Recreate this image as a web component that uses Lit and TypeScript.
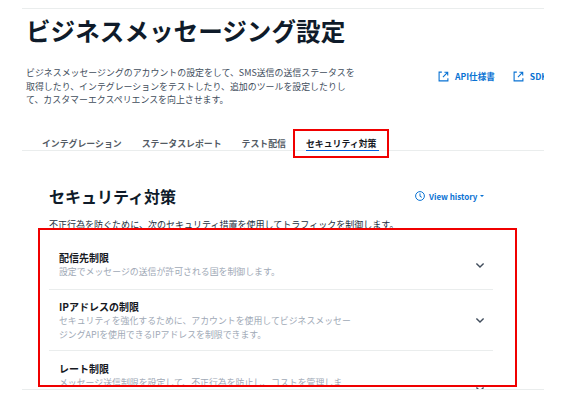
import { LitElement, html, css, svg } from "lit";
import { customElement } from "lit/decorators.js";

const extIcon = svg`<svg class="ext" viewBox="0 0 12 12" fill="none" stroke="#0972d3" stroke-width="1.2"><path d="M4.2 1.2H1.2v9.6h9.6V8"/><path d="M5.4 6.6l5-5M7 1.4h3.6V5"/></svg>`;
const chevron = svg`<svg class="chev" viewBox="0 0 10 7" fill="none" stroke="#414d5c" stroke-width="1.4"><path d="M1.4 1.4 5 5l3.6-3.6"/></svg>`;

@customElement("app-root")
export class AppRoot extends LitElement {
  static styles = css`
    :host { display: block; width: 570px; height: 402px; overflow: hidden; position: relative; background: #fff; font-family: "Noto Sans CJK JP", "Noto Sans", sans-serif; color: #16191f; }
    .page { margin-left: 22px; width: 522px; height: 380px; border-top: 1px solid #eaeded; border-bottom: 1px solid #eaeded; margin-top: 8px; overflow: hidden; position: relative; }
    h1 { margin: 0; padding: 0 0 0 4px; font-size: 24.6px; line-height: 36px; font-weight: 700; color: #0f1b2a; margin-top: 3px; white-space: nowrap; }
    .head { display: flex; margin-top: 18px; padding-left: 4px; }
    .desc { width: 332px; font-size: 8.92px; line-height: 13.7px; color: #414d5c; flex: none; }
    .links { display: flex; gap: 18px; margin-left: 80px; margin-top: 0; white-space: nowrap; height: 20px; align-items: center; }
    .link { display: flex; align-items: center; gap: 6px; color: #0972d3; font-size: 8.6px; font-weight: 700; }
    .ext { width: 11px; height: 11px; flex: none; }
    .tabs { display: flex; margin-top: 30px; border-bottom: 1px solid #eaeded; padding-left: 20px; height: 13px; gap: 20px; font-size: 8.9px; font-weight: 700; color: #545b64; line-height: 13px; }
    .tab.active { color: #16191f; border-bottom: 1px solid #0060df; height: 13px; width: 73px; }
    .section { padding-left: 27px; margin-top: 30px; }
    .sechead { display: flex; align-items: center; height: 30px; }
    h2 { margin: 0; font-size: 16px; font-weight: 700; line-height: 30px; color: #0f1b2a; width: 366px; }
    .hist { display: flex; align-items: center; gap: 4px; color: #0972d3; font-size: 8px; font-weight: 700; }
    .clock { width: 10px; height: 10px; }
    .caret { width: 0; height: 0; border-left: 2px solid transparent; border-right: 2px solid transparent; border-top: 2px solid #0972d3; margin-left: -1px; }
    .intro { font-size: 9.03px; line-height: 13px; color: #232f3e; margin-top: 7px; white-space: nowrap; }
    .list { width: 444px; margin-top: 11px; }
    .row { display: flex; position: relative; border-bottom: 1px solid #eaeded; padding: 0 0 0 10px; }
    .row:last-child { border-bottom: 0; }
    .txt { width: 295px; }
    .t { font-size: 10px; font-weight: 700; line-height: 14px; color: #16191f; }
    .d { font-size: 8.9px; line-height: 13.7px; color: #a0a9b6; }
    .pin { position: absolute; left: 0; width: 100%; height: 6px; }
    .pin1 { top: 20px; }
    .pin2 { top: 27px; }
    .pin3 { top: 35px; }
    .chev { position: absolute; width: 10px; height: 7px; left: 426px; }
    .r1 { height: 47px; }
    .r1 .txt { padding-top: 9px; }
    .r1 .d { white-space: nowrap; }
    .r2 { height: 60px; }
    .r2 .txt { padding-top: 10px; }
    .r3 { height: 60px; }
    .r3 .txt { padding-top: 11px; }
    .mark { position: absolute; border: 2px solid #f00000; box-sizing: border-box; pointer-events: none; }
    .m1 { left: 293px; top: 129px; width: 96px; height: 29px; }
    .m2 { left: 38px; top: 228px; width: 479px; height: 159px; }
  `;

  render() {
    return html`
      <div class="page">
        <h1>ビジネスメッセージング設定</h1>
        <div class="head">
          <div class="desc">ビジネスメッセージングのアカウントの設定をして、SMS送信の送信ステータスを取得したり、インテグレーションをテストしたり、追加のツールを設定したりして、カスタマーエクスペリエンスを向上させます。</div>
          <div class="links">
            <span class="link">${extIcon}API仕様書</span>
            <span class="link">${extIcon}SDK</span>
          </div>
        </div>
        <div class="tabs">
          <span class="tab">インテグレーション</span>
          <span class="tab">ステータスレポート</span>
          <span class="tab">テスト配信</span>
          <span class="tab active">セキュリティ対策</span>
        </div>
        <div class="section">
          <div class="sechead">
            <h2>セキュリティ対策</h2>
            <span class="hist">
              <svg class="clock" viewBox="0 0 10 10" fill="none" stroke="#0972d3" stroke-width="1"><circle cx="5" cy="5" r="4.4"/><path d="M5 2.4V5.3l1.8 1"/></svg>
              View history <i class="caret"></i>
            </span>
          </div>
          <div class="intro">不正行為を防ぐために、次のセキュリティ措置を使用してトラフィックを制御します。</div>
          <div class="list">
            <div class="row r1">
              <div class="txt"><div class="t">配信先制限</div><div class="d">設定でメッセージの送信が許可される国を制御します。</div></div>
              <span class="pin pin1">${chevron}</span>
            </div>
            <div class="row r2">
              <div class="txt"><div class="t">IPアドレスの制限</div><div class="d">セキュリティを強化するために、アカウントを使用してビジネスメッセージングAPIを使用できるIPアドレスを制限できます。</div></div>
              <span class="pin pin2">${chevron}</span>
            </div>
            <div class="row r3">
              <div class="txt"><div class="t">レート制限</div><div class="d">メッセージ送信制限を設定して、不正行為を防止し、コストを管理します。</div></div>
              <span class="pin pin3">${chevron}</span>
            </div>
          </div>
        </div>
      </div>
      <div class="mark m1"></div>
      <div class="mark m2"></div>
    `;
  }
}
